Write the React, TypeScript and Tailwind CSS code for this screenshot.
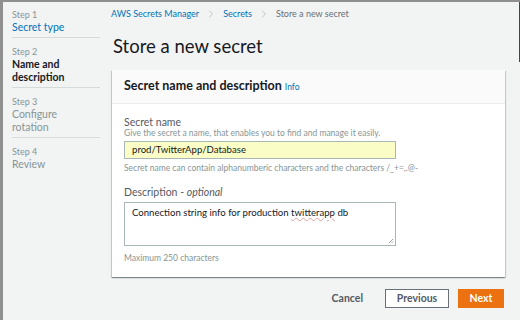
import { ChevronRight } from "lucide-react";

const steps = [
  { n: 1, label: "Secret type", state: "done" },
  { n: 2, label: "Name and description", state: "current" },
  { n: 3, label: "Configure rotation", state: "todo" },
  { n: 4, label: "Review", state: "todo" },
];

function Sidebar() {
  return (
    <div className="w-[97px] shrink-0 pl-[9px] pt-[7px]">
      {steps.map((s, i) => (
        <div
          key={s.n}
          className={`pb-[3px] ${i < steps.length - 1 ? "border-b border-[#d5dbdb] mb-[8px]" : ""}`}
        >
          <div className="text-[9px] leading-[12px] text-[#879596]">Step {s.n}</div>
          <div
            className={`text-[10.5px] leading-[13px] ${
              s.state === "done"
                ? "text-[#0073bb]"
                : s.state === "current"
                  ? "font-bold text-[#16191f] w-[60px]"
                  : "text-[#879596] w-[60px]"
            }`}
          >
            {s.label}
          </div>
        </div>
      ))}
    </div>
  );
}

export default function App() {
  return (
    <div
      className="relative w-[520px] h-[320px] overflow-hidden bg-[#f2f3f3] border-t-[2px] border-l-[3px] border-[#8f8f8f] flex text-[#16191f]"
      style={{ fontFamily: "Lato, 'Open Sans', 'Liberation Sans', sans-serif" }}
    >
      <div className="absolute right-0 top-0 w-[1px] h-[60px] bg-[#444]" />
      <Sidebar />
      <div className="flex-1 pl-[11px] pr-[15px] pt-[5px]">
        <div className="flex items-center text-[9px] leading-[14px]">
          <span className="text-[#0073bb]">AWS Secrets Manager</span>
          <ChevronRight className="w-[12px] h-[12px] mx-[6px] text-[#aab7b8]" strokeWidth={1.5} />
          <span className="text-[#0073bb]">Secrets</span>
          <ChevronRight className="w-[12px] h-[12px] mx-[6px] text-[#aab7b8]" strokeWidth={1.5} />
          <span className="text-[#687078]">Store a new secret</span>
        </div>
        <h1 className="text-[18.5px] leading-[24px] mt-[13px] mb-[12px] pl-[2px]">Store a new secret</h1>

        <div className="ml-[1px] bg-white shadow-[0_1px_1px_rgba(0,28,36,0.3),1px_1px_1px_rgba(0,28,36,0.15),-1px_1px_1px_rgba(0,28,36,0.15)]">
          <div className="bg-[#fafafa] border-b border-[#eaeded] h-[34px] flex items-center px-[12px]">
            <span className="text-[12.5px] font-bold">Secret name and description</span>
            <span className="text-[8.5px] text-[#0073bb] ml-[3px] mt-[2px]">Info</span>
          </div>
          <div className="px-[12px] pt-[12px] pb-[14px]">
            <div className="text-[10.5px] leading-[12px] text-[#545b64]">Secret name</div>
            <div className="text-[8.5px] leading-[10px] text-[#879596]">
              Give the secret a name, that enables you to find and manage it easily.
            </div>
            <div className="w-[272px] h-[18px] mt-[3px] bg-[#fafdc5] border border-[#aab7b8] flex items-center px-[7px] text-[9.6px]">
              prod/TwitterApp/Database
            </div>
            <div className="text-[8.5px] leading-[10px] text-[#879596] mt-[4px]">
              Secret name can contain alphanumberic characters and the characters /_+=,.@-
            </div>

            <div className="text-[10.5px] leading-[12px] text-[#545b64] mt-[13px]">
              Description - <i>optional</i>
            </div>
            <div className="relative w-[272px] h-[44px] mt-[4px] bg-white border border-[#aab7b8] px-[7px] pt-[3px] text-[9.6px] leading-[14px]">
              Connection string info for production{" "}
              <span className="underline decoration-wavy decoration-[#e0a0a0] decoration-[0.5px]">twitterapp</span> db
              <svg className="absolute right-[1px] bottom-[1px]" width="6" height="6" viewBox="0 0 6 6">
                <path d="M5 1L1 5M5 3.5L3.5 5" stroke="#888" strokeWidth="0.8" />
              </svg>
            </div>
            <div className="text-[8.5px] leading-[10px] text-[#879596] mt-[7px]">Maximum 250 characters</div>
          </div>
        </div>

        <div className="flex items-center justify-end mt-[12px] pr-[1px]">
          <span className="text-[10.5px] font-bold text-[#545b64] mr-[22px]">Cancel</span>
          <div className="w-[64px] h-[19px] border border-[#687078] bg-white flex items-center justify-center text-[10.5px] font-bold text-[#545b64] mr-[9px]">
            Previous
          </div>
          <div className="w-[46px] h-[19px] bg-[#ec7211] flex items-center justify-center text-[10.5px] font-bold text-white">
            Next
          </div>
        </div>
      </div>
    </div>
  );
}
